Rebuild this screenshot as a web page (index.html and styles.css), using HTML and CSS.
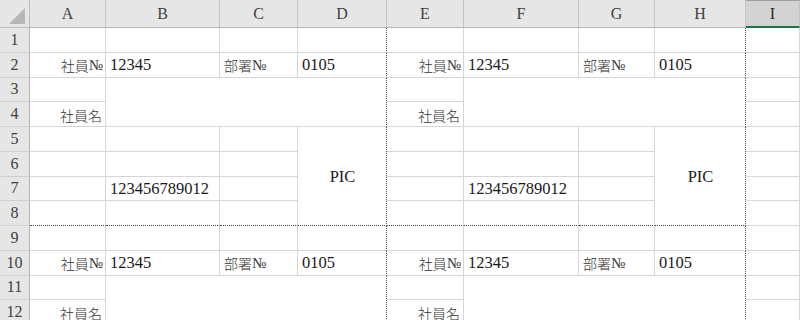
FILE: index.html
```html
<!DOCTYPE html>
<html lang="ja">
<head>
    <meta charset="UTF-8">
    <title>社員カード</title>
    <link rel="stylesheet" href="styles.css">
</head>
<body>
    <div class="sheet">
        <!-- header row -->
        <div class="corner">
            <svg width="30" height="28" viewBox="0 0 30 28"><polygon points="9,24 25,24 25,8" fill="#b6b6b6"/></svg>
        </div>
        <div class="colh">A</div>
        <div class="colh">B</div>
        <div class="colh">C</div>
        <div class="colh">D</div>
        <div class="colh">E</div>
        <div class="colh">F</div>
        <div class="colh">G</div>
        <div class="colh">H</div>
        <div class="colh active">I</div>

        <!-- row 1 -->
        <div class="rowh">1</div>
        <div class="cell"></div><div class="cell"></div><div class="cell"></div><div class="cell pb-r"></div>
        <div class="cell"></div><div class="cell"></div><div class="cell"></div><div class="cell pb-r"></div>
        <div class="cell"></div>

        <!-- row 2 -->
        <div class="rowh">2</div>
        <div class="cell r"><span class="jp">社員</span><span class="no">№</span></div>
        <div class="cell">12345</div>
        <div class="cell"><span class="jp">部署</span><span class="no">№</span></div>
        <div class="cell pb-r">0105</div>
        <div class="cell r"><span class="jp">社員</span><span class="no">№</span></div>
        <div class="cell">12345</div>
        <div class="cell"><span class="jp">部署</span><span class="no">№</span></div>
        <div class="cell pb-r">0105</div>
        <div class="cell"></div>

        <!-- row 3 -->
        <div class="rowh">3</div>
        <div class="cell"></div>
        <div class="cell pb-r name-box"></div>
        <div class="cell"></div>
        <div class="cell pb-r name-box"></div>
        <div class="cell"></div>

        <!-- row 4 -->
        <div class="rowh">4</div>
        <div class="cell r"><span class="jp">社員名</span></div>
        <div class="cell r"><span class="jp">社員名</span></div>
        <div class="cell"></div>

        <!-- row 5 -->
        <div class="rowh">5</div>
        <div class="cell"></div><div class="cell"></div><div class="cell"></div>
        <div class="cell pb-r pb-b c pic">PIC</div>
        <div class="cell"></div><div class="cell"></div><div class="cell"></div>
        <div class="cell pb-r pb-b c pic">PIC</div>
        <div class="cell"></div>

        <!-- row 6 -->
        <div class="rowh">6</div>
        <div class="cell"></div><div class="cell"></div><div class="cell"></div>
        <div class="cell"></div><div class="cell"></div><div class="cell"></div>
        <div class="cell"></div>

        <!-- row 7 -->
        <div class="rowh">7</div>
        <div class="cell"></div><div class="cell">123456789012</div><div class="cell"></div>
        <div class="cell"></div><div class="cell">123456789012</div><div class="cell"></div>
        <div class="cell"></div>

        <!-- row 8 -->
        <div class="rowh">8</div>
        <div class="cell pb-b"></div><div class="cell pb-b"></div><div class="cell pb-b"></div>
        <div class="cell pb-b"></div><div class="cell pb-b"></div><div class="cell pb-b"></div>
        <div class="cell"></div>

        <!-- row 9 -->
        <div class="rowh">9</div>
        <div class="cell"></div><div class="cell"></div><div class="cell"></div><div class="cell pb-r"></div>
        <div class="cell"></div><div class="cell"></div><div class="cell"></div><div class="cell pb-r"></div>
        <div class="cell"></div>

        <!-- row 10 -->
        <div class="rowh">10</div>
        <div class="cell r"><span class="jp">社員</span><span class="no">№</span></div>
        <div class="cell">12345</div>
        <div class="cell"><span class="jp">部署</span><span class="no">№</span></div>
        <div class="cell pb-r">0105</div>
        <div class="cell r"><span class="jp">社員</span><span class="no">№</span></div>
        <div class="cell">12345</div>
        <div class="cell"><span class="jp">部署</span><span class="no">№</span></div>
        <div class="cell pb-r">0105</div>
        <div class="cell"></div>

        <!-- row 11 -->
        <div class="rowh">11</div>
        <div class="cell"></div>
        <div class="cell pb-r name-box"></div>
        <div class="cell"></div>
        <div class="cell pb-r name-box"></div>
        <div class="cell"></div>

        <!-- row 12 -->
        <div class="rowh">12</div>
        <div class="cell r"><span class="jp">社員名</span></div>
        <div class="cell r"><span class="jp">社員名</span></div>
        <div class="cell"></div>
    </div>
</body>
</html>
```

FILE: styles.css
```css
body {
    margin: 0;
    background: #fff;
    font-family: "Liberation Serif", serif;
    color: #1a1a1a;
    overflow: hidden;
}
.sheet {
    display: grid;
    grid-template-columns: 30px 76px 114px 78px 89px 77px 115px 76px 91px 1fr;
    grid-template-rows: 28px repeat(12, 24.75px);
    width: 800px;
}
.corner {
    background: #e6e6e6;
    border-right: 1px solid #bcbcbc;
    border-bottom: 1px solid #bcbcbc;
    box-sizing: border-box;
    position: relative;
}
.corner svg {
    position: absolute;
    left: 0;
    top: 0;
}
.colh {
    background: #e6e6e6;
    border-right: 1px solid #c4c4c4;
    border-bottom: 1px solid #b4b4b4;
    box-sizing: border-box;
    display: flex;
    align-items: center;
    justify-content: center;
    font-size: 16px;
    color: #404040;
    padding-top: 1px;
}
.colh.active {
    background: #d3d3d3;
    border-bottom: 2px solid #217346;
    border-top: 1px solid #9f9f9f;
    color: #262626;
}
.rowh {
    background: #e6e6e6;
    border-right: 1px solid #b4b4b4;
    border-bottom: 1px solid #d0d0d0;
    box-sizing: border-box;
    display: flex;
    align-items: center;
    justify-content: center;
    font-size: 16px;
    color: #404040;
}
.cell {
    border-right: 1px solid #d6d6d6;
    border-bottom: 1px solid #d6d6d6;
    box-sizing: border-box;
    display: flex;
    align-items: center;
    padding: 1px 3px 0 4px;
    font-size: 16.5px;
    white-space: nowrap;
    overflow: hidden;
}
.cell.r {
    justify-content: flex-end;
    padding-right: 3px;
}
.cell.c {
    justify-content: center;
}
.jp {
    font-family: "Noto Sans CJK JP", sans-serif;
    font-size: 14px;
    font-weight: 300;
    color: #333;
}
.no {
    font-family: "Liberation Serif", serif;
    font-size: 15px;
    letter-spacing: -1px;
    color: #333;
}
.pb-r {
    border-right: 1px dotted #4a4a4a;
}
.pb-b {
    border-bottom: 1px dotted #4a4a4a;
}
.name-box {
    grid-column: span 3;
    grid-row: span 2;
}
.pic {
    grid-row: span 4;
}
```
